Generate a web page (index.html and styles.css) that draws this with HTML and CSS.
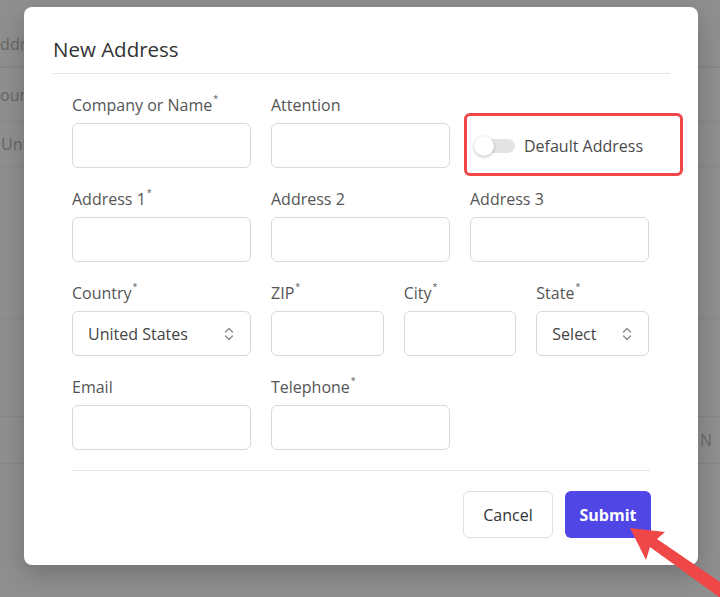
FILE: index.html
```html
<!DOCTYPE html>
<html lang="en">
<head>
    <meta charset="UTF-8">
    <meta name="viewport" content="width=device-width, initial-scale=1.0">
    <title>New Address</title>
    <link rel="stylesheet" href="styles.css">
</head>
<body>
    <div class="page">
        <div class="bg-row bg-head"><span class="bg-cell">Address</span></div>
        <div class="bg-row bg-title"><span class="bg-cell">Country</span></div>
        <div class="bg-row bg-item"><span class="bg-cell cell-plain">United States</span></div>
        <div class="bg-row bg-tall"></div>
        <div class="bg-row bg-mid"></div>
        <div class="bg-row bg-last"><span class="bg-end">N</span></div>
    </div>

    <div class="modal">
        <h2 class="modal-title">New Address</h2>
        <div class="modal-body">
            <div class="form-grid">
                <div class="field">
                    <label>Company or Name<sup>*</sup></label>
                    <input type="text">
                </div>
                <div class="field">
                    <label>Attention</label>
                    <input type="text">
                </div>
                <div class="field">
                    <label>&nbsp;</label>
                    <div class="toggle-wrap">
                        <span class="toggle"><span class="knob"></span></span>
                        <span class="toggle-text">Default Address</span>
                        <div class="highlight"></div>
                    </div>
                </div>

                <div class="field">
                    <label>Address 1<sup>*</sup></label>
                    <input type="text">
                </div>
                <div class="field">
                    <label>Address 2</label>
                    <input type="text">
                </div>
                <div class="field">
                    <label>Address 3</label>
                    <input type="text">
                </div>

                <div class="field">
                    <label>Country<sup>*</sup></label>
                    <div class="select">
                        <span>United States</span>
                        <svg class="chevrons" width="10" height="16" viewBox="0 0 10 16"><path d="M1.5 6 L5 2.5 L8.5 6 M1.5 10 L5 13.5 L8.5 10" fill="none" stroke="#8a8a8a" stroke-width="1.4" stroke-linecap="round" stroke-linejoin="round"/></svg>
                    </div>
                </div>
                <div class="sub-grid">
                    <div class="field">
                        <label>ZIP<sup>*</sup></label>
                        <input type="text">
                    </div>
                    <div class="field">
                        <label>City<sup>*</sup></label>
                        <input type="text">
                    </div>
                    <div class="field">
                        <label>State<sup>*</sup></label>
                        <div class="select">
                            <span>Select</span>
                            <svg class="chevrons" width="10" height="16" viewBox="0 0 10 16"><path d="M1.5 6 L5 2.5 L8.5 6 M1.5 10 L5 13.5 L8.5 10" fill="none" stroke="#8a8a8a" stroke-width="1.4" stroke-linecap="round" stroke-linejoin="round"/></svg>
                        </div>
                    </div>
                </div>

                <div class="field">
                    <label>Email</label>
                    <input type="text">
                </div>
                <div class="field">
                    <label>Telephone<sup>*</sup></label>
                    <input type="text">
                </div>
            </div>

            <div class="modal-footer">
                <button class="btn btn-cancel">Cancel</button>
                <button class="btn btn-submit">Submit</button>
            </div>
        </div>
    </div>

    <svg class="arrow" width="720" height="597" viewBox="0 0 720 597">
        <polygon points="630,528 665,532 657,539 733,591 726,602 650,547 646,560" fill="#ef4747"/>
    </svg>
</body>
</html>
```

FILE: styles.css
```css
body {
    margin: 0;
    padding: 0;
    width: 720px;
    height: 597px;
    overflow: hidden;
    background: #8f8f8f;
    font-family: 'Open Sans', 'Noto Sans', sans-serif;
    color: #333;
}

/* page behind the overlay */
.page {
    padding-top: 62px;
}
.bg-row {
    border-top: 1px solid #878787;
    display: flex;
    align-items: center;
}
.bg-head {
    margin-top: -40px;
    border-top: none;
    height: 44px;
    border-bottom: 1px solid #878787;
}
.bg-title {
    height: 53px;
}
.bg-item {
    height: 44px;
}
.bg-tall {
    height: 151px;
}
.bg-mid {
    height: 97px;
}
.bg-last {
    height: 46px;
    border-bottom: 1px solid #878787;
    justify-content: flex-end;
}
.bg-cell {
    font-size: 16px;
    color: #666;
    margin-left: -10px;
}
.cell-plain {
    margin-left: 1px;
}
.bg-end {
    font-size: 16px;
    color: #6a6a6a;
    margin-right: 8px;
}

/* modal */
.modal {
    position: absolute;
    top: 7px;
    left: 24px;
    width: 674px;
    height: 558px;
    box-sizing: border-box;
    background: #fff;
    border-radius: 8px;
    box-shadow: 0 8px 24px rgba(0, 0, 0, 0.22);
    padding: 0 28px 0 29px;
}
.modal-title {
    margin: 0;
    padding: 28px 0 10px;
    font-size: 20.5px;
    line-height: 28px;
    font-weight: 500;
    color: #333;
    border-bottom: 1px solid #e6e6e6;
}
.modal-body {
    padding: 21px 20px 0 19px;
}
.form-grid {
    display: grid;
    grid-template-columns: repeat(3, 179px);
    column-gap: 20px;
    row-gap: 21px;
}
.sub-grid {
    grid-column: span 2;
    display: grid;
    grid-template-columns: repeat(3, 1fr);
    column-gap: 20px;
}
.field {
    display: flex;
    flex-direction: column;
}
.field label {
    font-size: 16px;
    line-height: 20px;
    color: #555;
    margin-bottom: 8px;
    white-space: nowrap;
}
.field sup {
    font-size: 9px;
    vertical-align: top;
    line-height: 9px;
    position: relative;
    top: -1px;
    margin-left: 1px;
}
.field input,
.select {
    box-sizing: border-box;
    height: 45px;
    width: 100%;
    border: 1px solid #d9d9d9;
    border-radius: 6px;
    background: #fff;
    font-family: inherit;
    font-size: 16px;
    margin: 0;
}
.select {
    display: flex;
    align-items: center;
    justify-content: space-between;
    padding: 0 16px 0 15px;
    color: #444;
}

/* default address toggle */
.toggle-wrap {
    position: relative;
    height: 45px;
    display: flex;
    align-items: center;
    padding-left: 4px;
}
.toggle {
    position: relative;
    width: 36px;
    height: 14px;
    margin-left: 5px;
    background: #e4e4e4;
    border-radius: 7px;
}
.knob {
    position: absolute;
    left: -5px;
    top: -3px;
    width: 20px;
    height: 20px;
    border-radius: 50%;
    background: #fff;
    box-shadow: 0 1px 3px rgba(0, 0, 0, 0.28);
}
.toggle-text {
    margin-left: 9px;
    font-size: 16px;
    color: #4a4a4a;
    white-space: nowrap;
}
.highlight {
    position: absolute;
    top: -10px;
    bottom: -8px;
    left: -6px;
    right: -34px;
    border: 3px solid #ef4747;
    border-radius: 6px;
}

/* footer */
.modal-footer {
    margin-top: 20px;
    border-top: 1px solid #e6e6e6;
    padding-top: 20px;
    display: flex;
    justify-content: flex-end;
    gap: 12px;
}
.btn {
    height: 47px;
    border-radius: 6px;
    font-family: inherit;
    font-size: 16px;
    cursor: pointer;
}
.btn-cancel {
    width: 90px;
    background: #fff;
    border: 1px solid #e0e0e0;
    color: #333;
}
.btn-submit {
    width: 86px;
    background: #4f46e5;
    border: none;
    color: #fff;
    font-weight: 700;
    margin-right: -1px;
}

.arrow {
    position: absolute;
    top: 0;
    left: 0;
    pointer-events: none;
}
```
